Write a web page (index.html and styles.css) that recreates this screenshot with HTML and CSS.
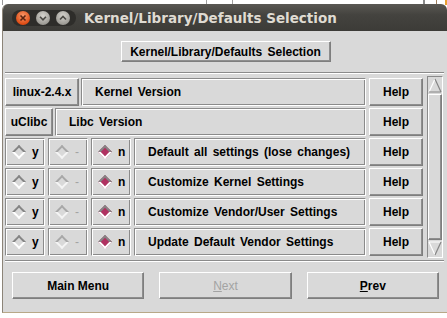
FILE: index.html
```html
<!DOCTYPE html>
<html lang="en">
<head>
  <meta charset="UTF-8" />
  <title>Kernel/Library/Defaults Selection</title>
  <link rel="stylesheet" href="styles.css">
</head>
<body>
  <div class="window">
    <div class="titlebar">
      <div class="wm-buttons">
        <svg width="64" height="18" viewBox="0 0 64 18">
          <defs>
            <radialGradient id="g-close" cx="50%" cy="35%" r="60%">
              <stop offset="0" stop-color="#f89a6c"/>
              <stop offset="1" stop-color="#de4a12"/>
            </radialGradient>
            <radialGradient id="g-gray" cx="50%" cy="35%" r="60%">
              <stop offset="0" stop-color="#d6d4ce"/>
              <stop offset="1" stop-color="#9c9a94"/>
            </radialGradient>
          </defs>
          <rect x="0" y="1" width="64" height="16" rx="8" fill="#2e2d2a"/>
          <circle cx="11" cy="9" r="7" fill="url(#g-close)"/>
          <path d="M8.5 6.5l5 5M13.5 6.5l-5 5" stroke="#5a2410" stroke-width="1.6"/>
          <circle cx="31" cy="9" r="7" fill="url(#g-gray)"/>
          <path d="M28 7.8l3 3 3-3" stroke="#4a4944" stroke-width="1.6" fill="none"/>
          <circle cx="51" cy="9" r="7" fill="url(#g-gray)"/>
          <path d="M48 10.5l3-3 3 3" stroke="#4a4944" stroke-width="1.6" fill="none"/>
        </svg>
      </div>
      <span class="title">Kernel/Library/Defaults Selection</span>
    </div>

    <div class="content">
      <div class="top">
        <button class="btn top-btn">Kernel/Library/Defaults Selection</button>
      </div>
      <div class="sep"></div>

      <div class="main">
        <div class="rows">
          <div class="row">
            <button class="btn pick pick-linux">linux-2.4.x</button>
            <div class="box label">Kernel Version</div>
            <button class="btn help">Help</button>
          </div>
          <div class="row">
            <button class="btn pick pick-libc">uClibc</button>
            <div class="box label">Libc Version</div>
            <button class="btn help">Help</button>
          </div>
          <div class="row">
            <div class="box radio"><span class="dia"></span>y</div>
            <div class="box radio off"><span class="dia"></span>-</div>
            <div class="box radio"><span class="dia on"></span>n</div>
            <div class="box label">Default all settings (lose changes)</div>
            <button class="btn help">Help</button>
          </div>
          <div class="row">
            <div class="box radio"><span class="dia"></span>y</div>
            <div class="box radio off"><span class="dia"></span>-</div>
            <div class="box radio"><span class="dia on"></span>n</div>
            <div class="box label">Customize Kernel Settings</div>
            <button class="btn help">Help</button>
          </div>
          <div class="row">
            <div class="box radio"><span class="dia"></span>y</div>
            <div class="box radio off"><span class="dia"></span>-</div>
            <div class="box radio"><span class="dia on"></span>n</div>
            <div class="box label">Customize Vendor/User Settings</div>
            <button class="btn help">Help</button>
          </div>
          <div class="row">
            <div class="box radio"><span class="dia"></span>y</div>
            <div class="box radio off"><span class="dia"></span>-</div>
            <div class="box radio"><span class="dia on"></span>n</div>
            <div class="box label">Update Default Vendor Settings</div>
            <button class="btn help">Help</button>
          </div>
        </div>

        <div class="scrollbar">
          <svg class="arrow" width="14" height="15" viewBox="0 0 14 15">
            <path d="M7 1L1 14" stroke="#fff" stroke-width="1.2"/>
            <path d="M7 1L13 14M1 14H13" stroke="#858585" stroke-width="1.2"/>
          </svg>
          <div class="slider"></div>
          <svg class="arrow" width="14" height="15" viewBox="0 0 14 15">
            <path d="M1 1H13M1 1L7 14" stroke="#fff" stroke-width="1.2"/>
            <path d="M13 1L7 14" stroke="#858585" stroke-width="1.2"/>
          </svg>
        </div>
      </div>

      <div class="sep sep-low"></div>

      <div class="nav">
        <button class="btn nav-btn">Main Menu</button>
        <button class="btn nav-btn disabled"><u>N</u>ext</button>
        <button class="btn nav-btn"><u>P</u>rev</button>
      </div>
    </div>
  </div>
</body>
</html>
```

FILE: styles.css
```css
* {
  box-sizing: border-box;
  margin: 0;
  padding: 0;
}

body {
  width: 447px;
  height: 318px;
  overflow: hidden;
  background-color: #fff;
  background-image: linear-gradient(to right,
    transparent 2px, #9a9a9a 2px, #9a9a9a 3px, transparent 3px,
    transparent 206px, #a0a0a0 206px, #a0a0a0 207px, transparent 207px,
    transparent 232px, #a0a0a0 232px, #a0a0a0 233px, transparent 233px,
    transparent 423px, #8a8a8a 423px, #8a8a8a 425px, transparent 425px,
    transparent 436px, #a08060 436px, #a08060 437px, transparent 437px,
    transparent 445px, #e8a030 445px);
  background-size: 447px 5px;
  background-repeat: no-repeat;
  padding: 4px 0 0 2px;
}

/* window frame */
.window {
  width: 445px;
  height: 309px;
  border-left: 1px solid #8c8478;
  border-bottom: 1px solid #b8a888;
  border-radius: 6px 6px 0 0;
  overflow: hidden;
}

.titlebar {
  height: 27px;
  display: flex;
  align-items: center;
  padding-left: 9px;
  background: linear-gradient(#5a5853, #44433f 40%, #3c3b37);
}

.wm-buttons {
  display: flex;
  margin-top: 1px;
}

.title {
  margin-left: 8px;
  margin-top: 1px;
  font-family: "DejaVu Sans", sans-serif;
  font-weight: bold;
  font-size: 13.5px;
  color: #dfdbd2;
}

.content {
  height: 281px;
  background-color: #d9d9d9;
  padding: 10px 3px 0 2px;
  font-family: "Liberation Sans", Arial, sans-serif;
  font-weight: bold;
  font-size: 12px;
  color: #000;
}

/* tk-ish widgets */
.btn {
  font: inherit;
  color: inherit;
  background-color: #d9d9d9;
  border: 1px solid;
  border-color: #fff #7e7e7e #7e7e7e #fff;
  box-shadow: inset -1px -1px 0 #8e8e8e;
  cursor: pointer;
}

.box {
  border: 1px solid;
  border-color: #8a8a8a #fff #fff #8a8a8a;
  box-shadow: inset 1px 1px 0 #fff, inset -1px -1px 0 #8a8a8a;
  display: flex;
  align-items: center;
}

.top {
  display: flex;
  justify-content: center;
}

.top-btn {
  height: 21px;
  width: 210px;
  margin-left: 2px;
  word-spacing: 2px;
}

.sep {
  height: 2px;
  margin-top: 10px;
  border-top: 1px solid #8a8a8a;
  border-bottom: 1px solid #fff;
}

.sep-low {
  margin-top: 2px;
}

.main {
  display: flex;
  gap: 4px;
  margin-top: 2px;
}

.rows {
  width: 418px;
  padding-top: 2px;
  display: flex;
  flex-direction: column;
  gap: 2px;
}

.row {
  height: 28px;
  display: flex;
  gap: 3px;
}

.pick-linux {
  width: 74px;
  margin-right: -1px;
}

.pick-libc {
  width: 48px;
  margin-right: -1px;
}

.label {
  flex: 1;
  padding-left: 13px;
  word-spacing: 2px;
}

.help {
  width: 54px;
}

.radio {
  width: 40px;
  padding-left: 6px;
  gap: 7px;
}

.radio.off {
  color: #a3a3a3;
  font-weight: normal;
}

.dia {
  width: 10px;
  height: 10px;
  margin-left: 2px;
  margin-right: 1px;
  transform: rotate(45deg);
  border: 2px solid;
  border-color: #858585 #fff #fff #858585;
}

.radio.off .dia {
  border-color: #a8a8a8 #f4f4f4 #f4f4f4 #a8a8a8;
}

.dia.on {
  background-color: #b03060;
}

.scrollbar {
  width: 16px;
  height: 182px;
  display: flex;
  flex-direction: column;
  align-items: center;
  padding: 1px;
  border: 1px solid;
  border-color: #8a8a8a #fff #fff #8a8a8a;
}

.arrow {
  flex: none;
}

.slider {
  flex: 1;
  width: 14px;
  margin: 1px 0;
  border: 1px solid;
  border-color: #fff #7e7e7e #7e7e7e #fff;
  box-shadow: inset -1px -1px 0 #8e8e8e;
}

.nav {
  display: flex;
  gap: 15px;
  padding: 0 5px 0 7px;
  margin-top: 10px;
}

.nav-btn {
  width: 133px;
  height: 27px;
}

.nav-btn.disabled {
  color: #a3a3a3;
  font-weight: normal;
}
```
